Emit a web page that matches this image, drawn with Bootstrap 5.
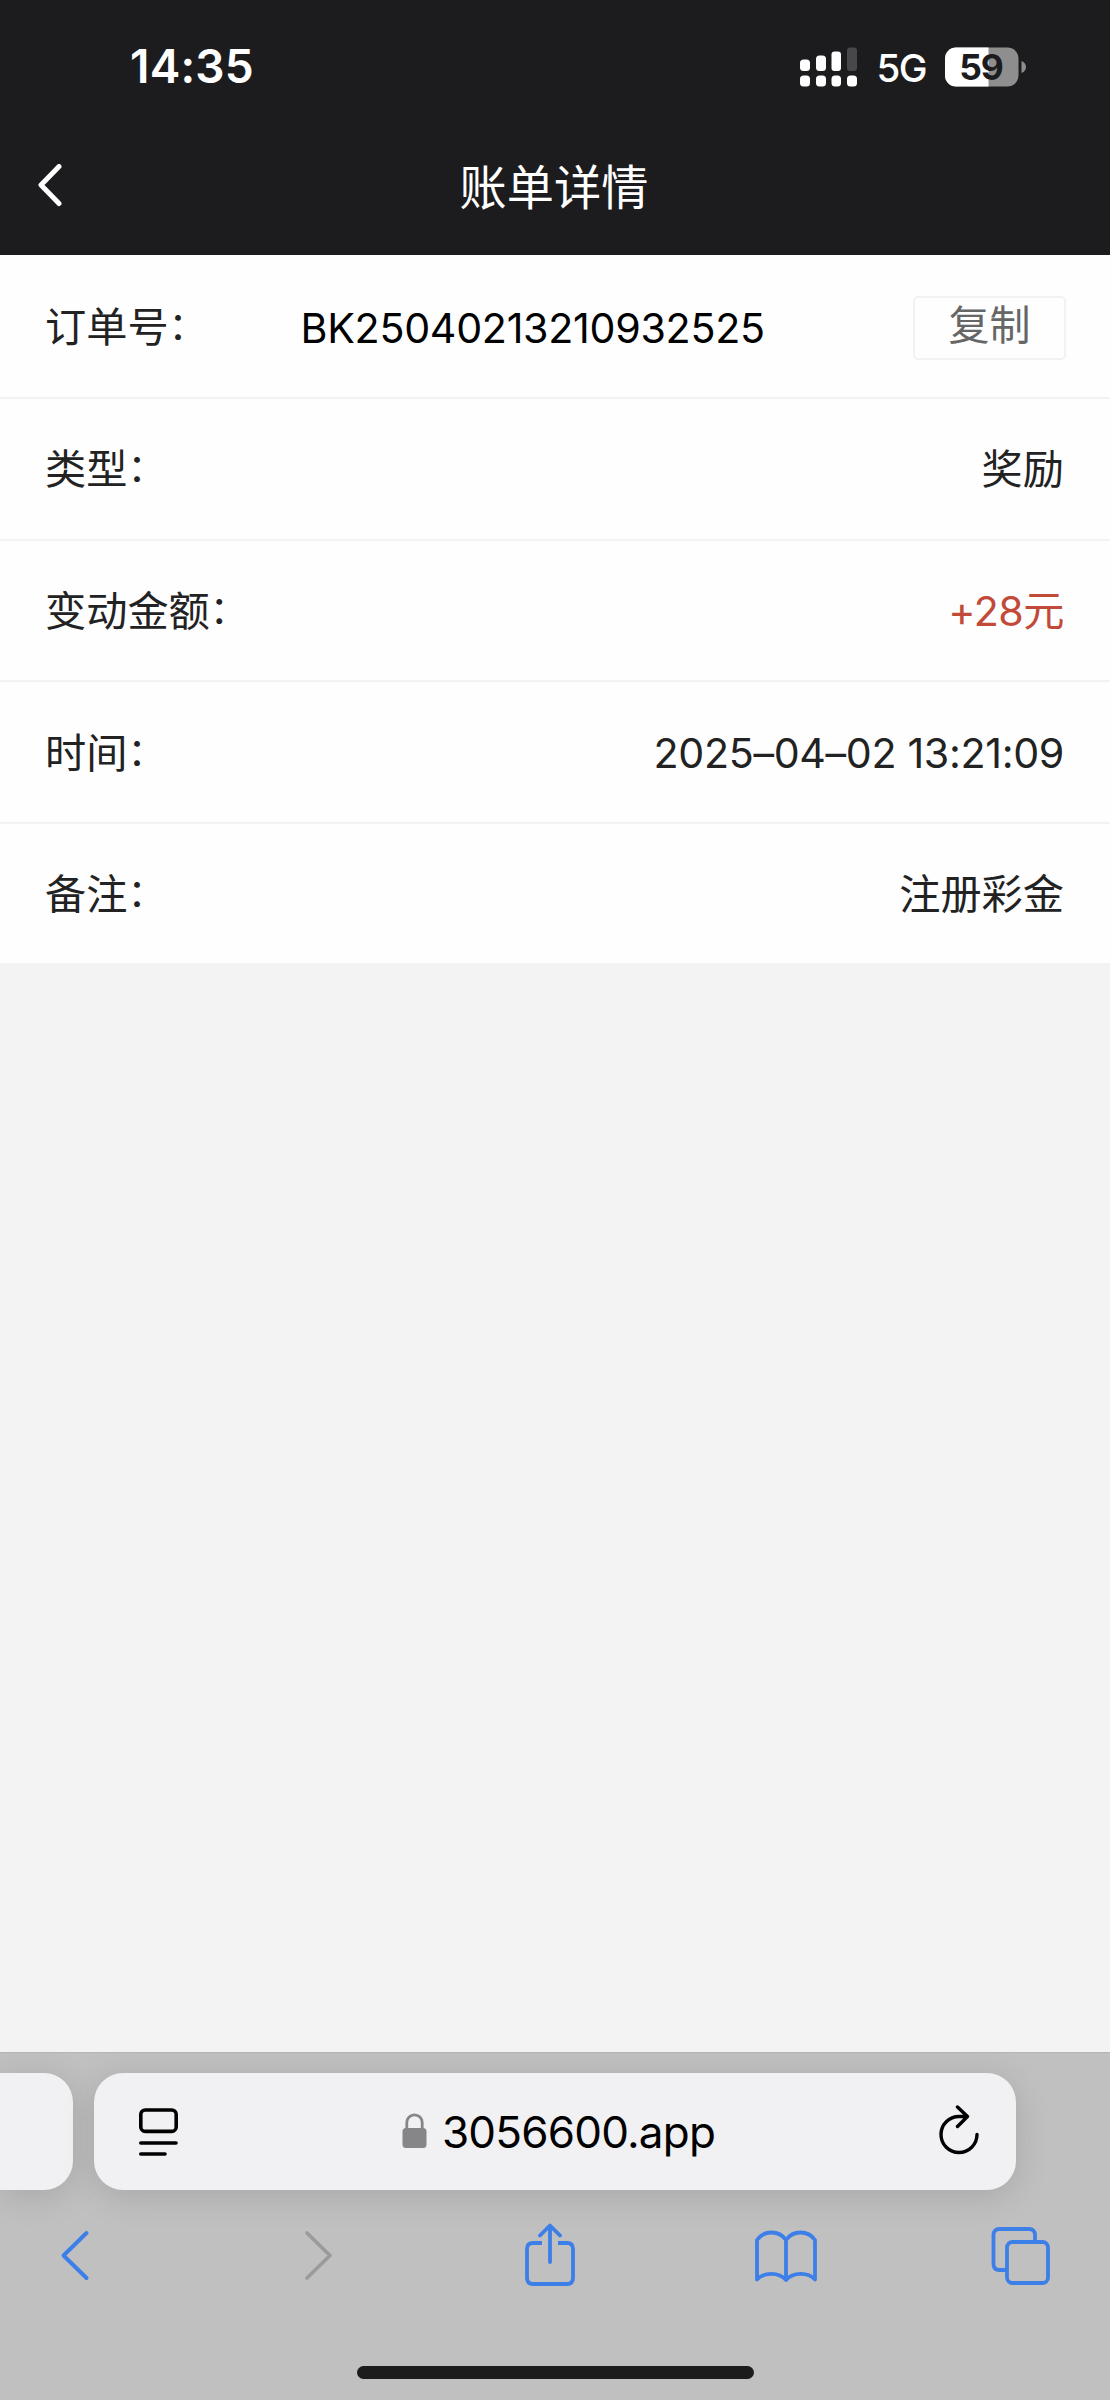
<!DOCTYPE html>
<html lang="zh-CN">
<head>
<meta charset="utf-8">
<meta name="viewport" content="width=device-width, initial-scale=1">
<title>账单详情</title>
<link href="https://cdn.jsdelivr.net/npm/bootstrap@5.3.0/dist/css/bootstrap.min.css" rel="stylesheet">
<style>
  body { font-family: Inter, "Noto Sans CJK SC", sans-serif; font-size: 41.2px; line-height: 1.2; background: #f3f3f3; color: #222; }
  svg { display: block; flex: none; }
  .phone { height: 2400px; overflow: hidden; }
  .top-area { background: #1c1c1e; height: 255px; color: #fff; }
  .status-bar { height: 134px; padding: 0 83px 0 130px; }
  .clock { font-size: 46px; font-weight: 600; letter-spacing: .2px; }
  .net { font-size: 38.5px; font-weight: 500; letter-spacing: -1.5px; margin-left: 18px; margin-right: 19px; padding-top: 2px; }
  .title-bar { height: 121px; padding: 26px 38px 0 36px; }
  .title-bar h1 { font-size: 47.2px; font-weight: 400; line-height: 56px; }
  .side { width: 26px; }
  .bill .list-group-item { height: 141.7px; padding: 2px 46px 0 45px; border: 0; border-bottom: 2px solid #f3f3f3; background: #fefefe; color: #222; }
  .bill .list-group-item:first-child { height: 144px; padding-top: 3px; padding-right: 44px; }
  .bill .list-group-item:last-child { border-bottom: 0; height: 139px; padding-top: 3px; }
  .colon { display: inline-block; vertical-align: 3px; line-height: 1; font-size: 38px; }
  .order-no { color: #000; margin-left: 94px; letter-spacing: -.3px; padding-top: 2px; }
  .copy-btn { width: 153px; height: 64px; padding: 0 0 6px; border: 2px solid #f2f2f3; border-radius: 5px; font-size: 41px; line-height: 54px; color: #666; background: #fefefe; }
  .amount { color: #c14a38; letter-spacing: -.5px; }
  .date { letter-spacing: -.35px; }
  .browser { height: 348px; background: #c0c0c1; border-top: 1px solid #b5b5b6; }
  .pills { padding-top: 20px; gap: 21px; height: 137px; }
  .pill { height: 117px; background: #f1f1f3; box-shadow: 0 6px 34px rgba(0,0,0,.13); }
  .pill-prev { width: 73px; border-radius: 0 29px 29px 0; }
  .pill-main { width: 922px; border-radius: 29px; padding: 0 36px 0 44px; color: #000; }
  .url { font-size: 44px; gap: 15px; letter-spacing: -.8px; }
  .url span { padding-top: 2px; }
  .tools { height: 134px; padding: 0 57px 5px 43px; }
  .home { width: 397px; height: 13px; border-radius: 7px; background: #1c1c1c; margin-top: 42px; }
</style>
</head>
<body>
<div class="phone d-flex flex-column">
  <header class="top-area">
    <div class="status-bar d-flex align-items-center">
      <span class="clock me-auto">14:35</span>
      <svg width="58" height="40" viewBox="0 0 58 40" fill="#fff">
        <rect x="0" y="12.5" width="10" height="11.5" rx="3.5"/><rect x="16" y="8.5" width="10" height="15.5" rx="3.5"/><rect x="31.500" y="4.500" width="9.500" height="19.500" rx="3"/><rect x="47" y="0.500" width="10" height="23.500" rx="3" fill="#48484a"/>
        <rect x="0" y="28.500" width="10" height="11" rx="3.500"/><rect x="16" y="28.500" width="10" height="11" rx="3.500"/><rect x="31.500" y="28.500" width="9.500" height="11" rx="3.500"/><rect x="47" y="28.500" width="10" height="11" rx="3.500"/>
      </svg>
      <span class="net">5G</span>
      <svg width="82" height="40" viewBox="0 0 82 40">
        <rect x="0" y="0.500" width="73.500" height="39" rx="11" fill="#8e8e8f"/>
        <path d="M43.500 .5H11A11 11 0 0 0 0 11.500V28.500A11 11 0 0 0 11 39.500H43.500Z" fill="#fff"/>
        <path d="M76.500 14C79.500 15 81 17.500 81 20S79.500 25 76.500 26Z" fill="#8e8e8f"/>
        <text x="36" y="32.500" text-anchor="middle" font-family="Inter" font-size="35.500" font-weight="700" letter-spacing="-1" fill="#1c1c1e">59</text>
      </svg>
    </div>
    <div class="title-bar d-flex justify-content-between align-items-start">
      <svg class="side mt-1" width="26" height="44" viewBox="0 0 26 44" fill="none" stroke="#fff" stroke-width="5" stroke-linecap="round" stroke-linejoin="round"><path d="M23 2.500 5 21 23 39.500"/></svg>
      <h1 class="mb-0">账单详情</h1>
      <span class="side"></span>
    </div>
  </header>

  <ul class="bill list-group list-group-flush">
    <li class="list-group-item d-flex align-items-center"><span>订单号<span class="colon">：</span></span><span class="order-no">BK25040213210932525</span><button type="button" class="copy-btn btn ms-auto">复制</button></li>
    <li class="list-group-item d-flex align-items-center justify-content-between"><span>类型<span class="colon">：</span></span><span>奖励</span></li>
    <li class="list-group-item d-flex align-items-center justify-content-between"><span>变动金额<span class="colon">：</span></span><span class="amount">+28元</span></li>
    <li class="list-group-item d-flex align-items-center justify-content-between"><span>时间<span class="colon">：</span></span><span class="date">2025–04–02 13:21:09</span></li>
    <li class="list-group-item d-flex align-items-center justify-content-between"><span>备注<span class="colon">：</span></span><span>注册彩金</span></li>
  </ul>

  <footer class="browser mt-auto">
    <div class="pills d-flex">
      <div class="pill pill-prev"></div>
      <div class="pill pill-main d-flex align-items-center justify-content-between">
        <svg width="41" height="50" viewBox="0 0 41 50" fill="none" stroke="#000" stroke-width="3.600" stroke-linecap="round"><rect x="2.800" y="3" width="35.400" height="21.400" rx="4.500"/><path d="M2.800 36H38M2.800 47H27"/></svg>
        <div class="url d-flex align-items-center">
          <svg width="25" height="36" viewBox="0 0 25 36"><path d="M4.800 17V9.500a7.700 7.700 0 0 1 15.400 0V17" fill="none" stroke="#868688" stroke-width="2.800"/><rect x=".5" y="15" width="24" height="20" rx="3.500" fill="#868688"/></svg>
          <span>3056600.app</span>
        </div>
        <svg width="42" height="54" viewBox="0 0 42 54" fill="none" stroke="#000" stroke-width="3.400" stroke-linecap="round" stroke-linejoin="round"><path d="M39 29.500A18 18 0 1 1 21 11.500H29M19.500 2 29.500 11.500 19.500 21.500"/></svg>
      </div>
    </div>
    <nav class="tools d-flex align-items-center justify-content-between">
      <svg width="64" height="64" viewBox="0 0 64 64" fill="none" stroke="#3d7fe8" stroke-width="4" stroke-linecap="round" stroke-linejoin="round"><path d="M43.500 10 20.500 32.500 43.500 55"/></svg>
      <svg width="64" height="64" viewBox="0 0 64 64" fill="none" stroke="#9b9b9d" stroke-width="3.600" stroke-linecap="round" stroke-linejoin="round"><path d="M27 10 50 32.500 27 55"/></svg>
      <svg width="64" height="64" viewBox="0 0 64 64" fill="none" stroke="#3d7fe8" stroke-width="3.800" stroke-linecap="round" stroke-linejoin="round"><path d="M26 20H17Q11 20 11 26V55Q11 61 17 61H51Q57 61 57 55V26Q57 20 51 20H42" stroke-linecap="butt"/><path d="M34 39V3M24 12.500 34 2.500 44 12.500"/></svg>
      <svg width="64" height="64" viewBox="0 0 64 64" fill="none" stroke="#3d7fe8" stroke-width="3.800" stroke-linejoin="round"><path d="M33 17C26 7 11 7 4 17V56.500C11 49 26 49 33 57C40 49 55 49 62 56.500V17C55 7 40 7 33 17V57"/></svg>
      <svg width="64" height="64" viewBox="0 0 64 64" fill="none" stroke="#3d7fe8" stroke-width="3.800"><rect x="18" y="19" width="41" height="41" rx="5.500"/><path d="M46 19V12Q46 6 40 6H10.500Q4.500 6 4.500 12V41Q4.500 47 10.500 47H18"/></svg>
    </nav>
    <div class="home mx-auto"></div>
  </footer>
</div>
<script src="https://cdn.jsdelivr.net/npm/bootstrap@5.3.0/dist/js/bootstrap.bundle.min.js"></script>
</body>
</html>
